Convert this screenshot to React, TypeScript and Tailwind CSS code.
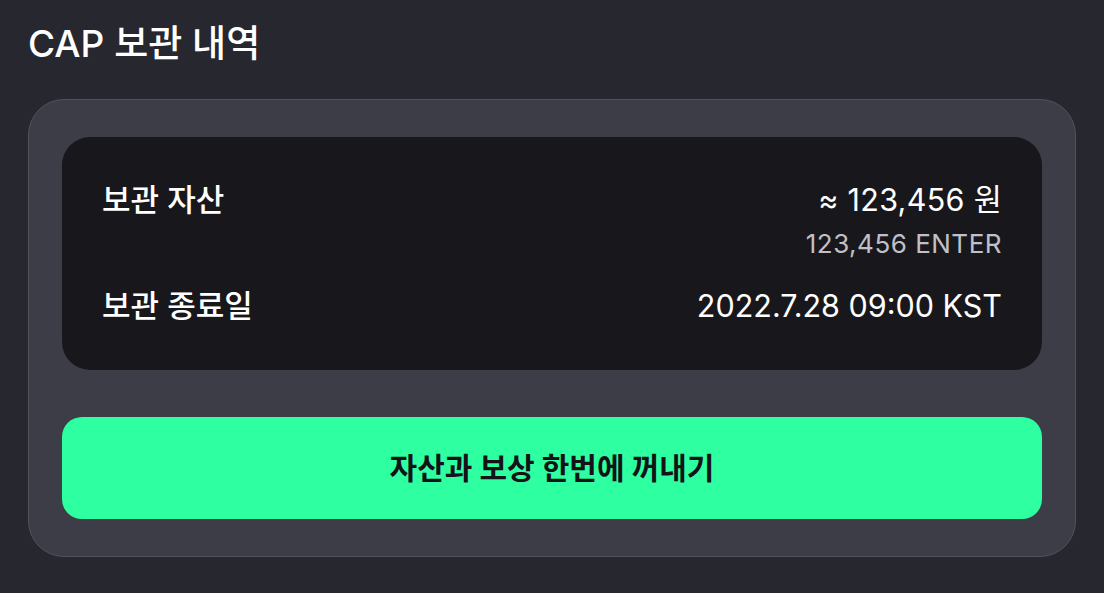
export default function App() {
  return (
    <div className="min-h-screen w-full bg-[#27272f] px-[28px] pt-[20px] font-['Inter','Noto_Sans_CJK_KR',sans-serif]">
      <h1 className="text-[37px] leading-[48px] font-medium text-white">CAP 보관 내역</h1>

      <div className="mt-[31px] rounded-[36px] border border-[#52525c] bg-[#3d3d47] px-[33px] pt-[37px] pb-[37px]">
        <div className="rounded-[28px] bg-[#18181c] px-[40px] pt-[45px] pb-[46px]">
          <div className="flex items-start justify-between">
            <span className="text-[31px] leading-[36px] font-medium text-white">보관 자산</span>
            <div className="flex flex-col items-end">
              <span className="text-[30.5px] leading-[36px] tracking-[0.3px] text-white">≈ 123,456 원</span>
              <span className="mt-[11px] text-[26px] leading-[30px] tracking-[0.5px] text-[#c0c0c8]">123,456 ENTER</span>
            </div>
          </div>
          <div className="mt-[29px] flex items-center justify-between">
            <span className="text-[31px] leading-[36px] font-medium text-white">보관 종료일</span>
            <span className="text-[30.5px] leading-[36px] text-white">2022.7.28 09:00 KST</span>
          </div>
        </div>

        <button className="mt-[47px] flex h-[102px] w-full items-center justify-center rounded-[20px] bg-[#2effa0] text-[30px] font-bold text-[#141418]">
          자산과 보상 한번에 꺼내기
        </button>
      </div>
    </div>
  )
}
